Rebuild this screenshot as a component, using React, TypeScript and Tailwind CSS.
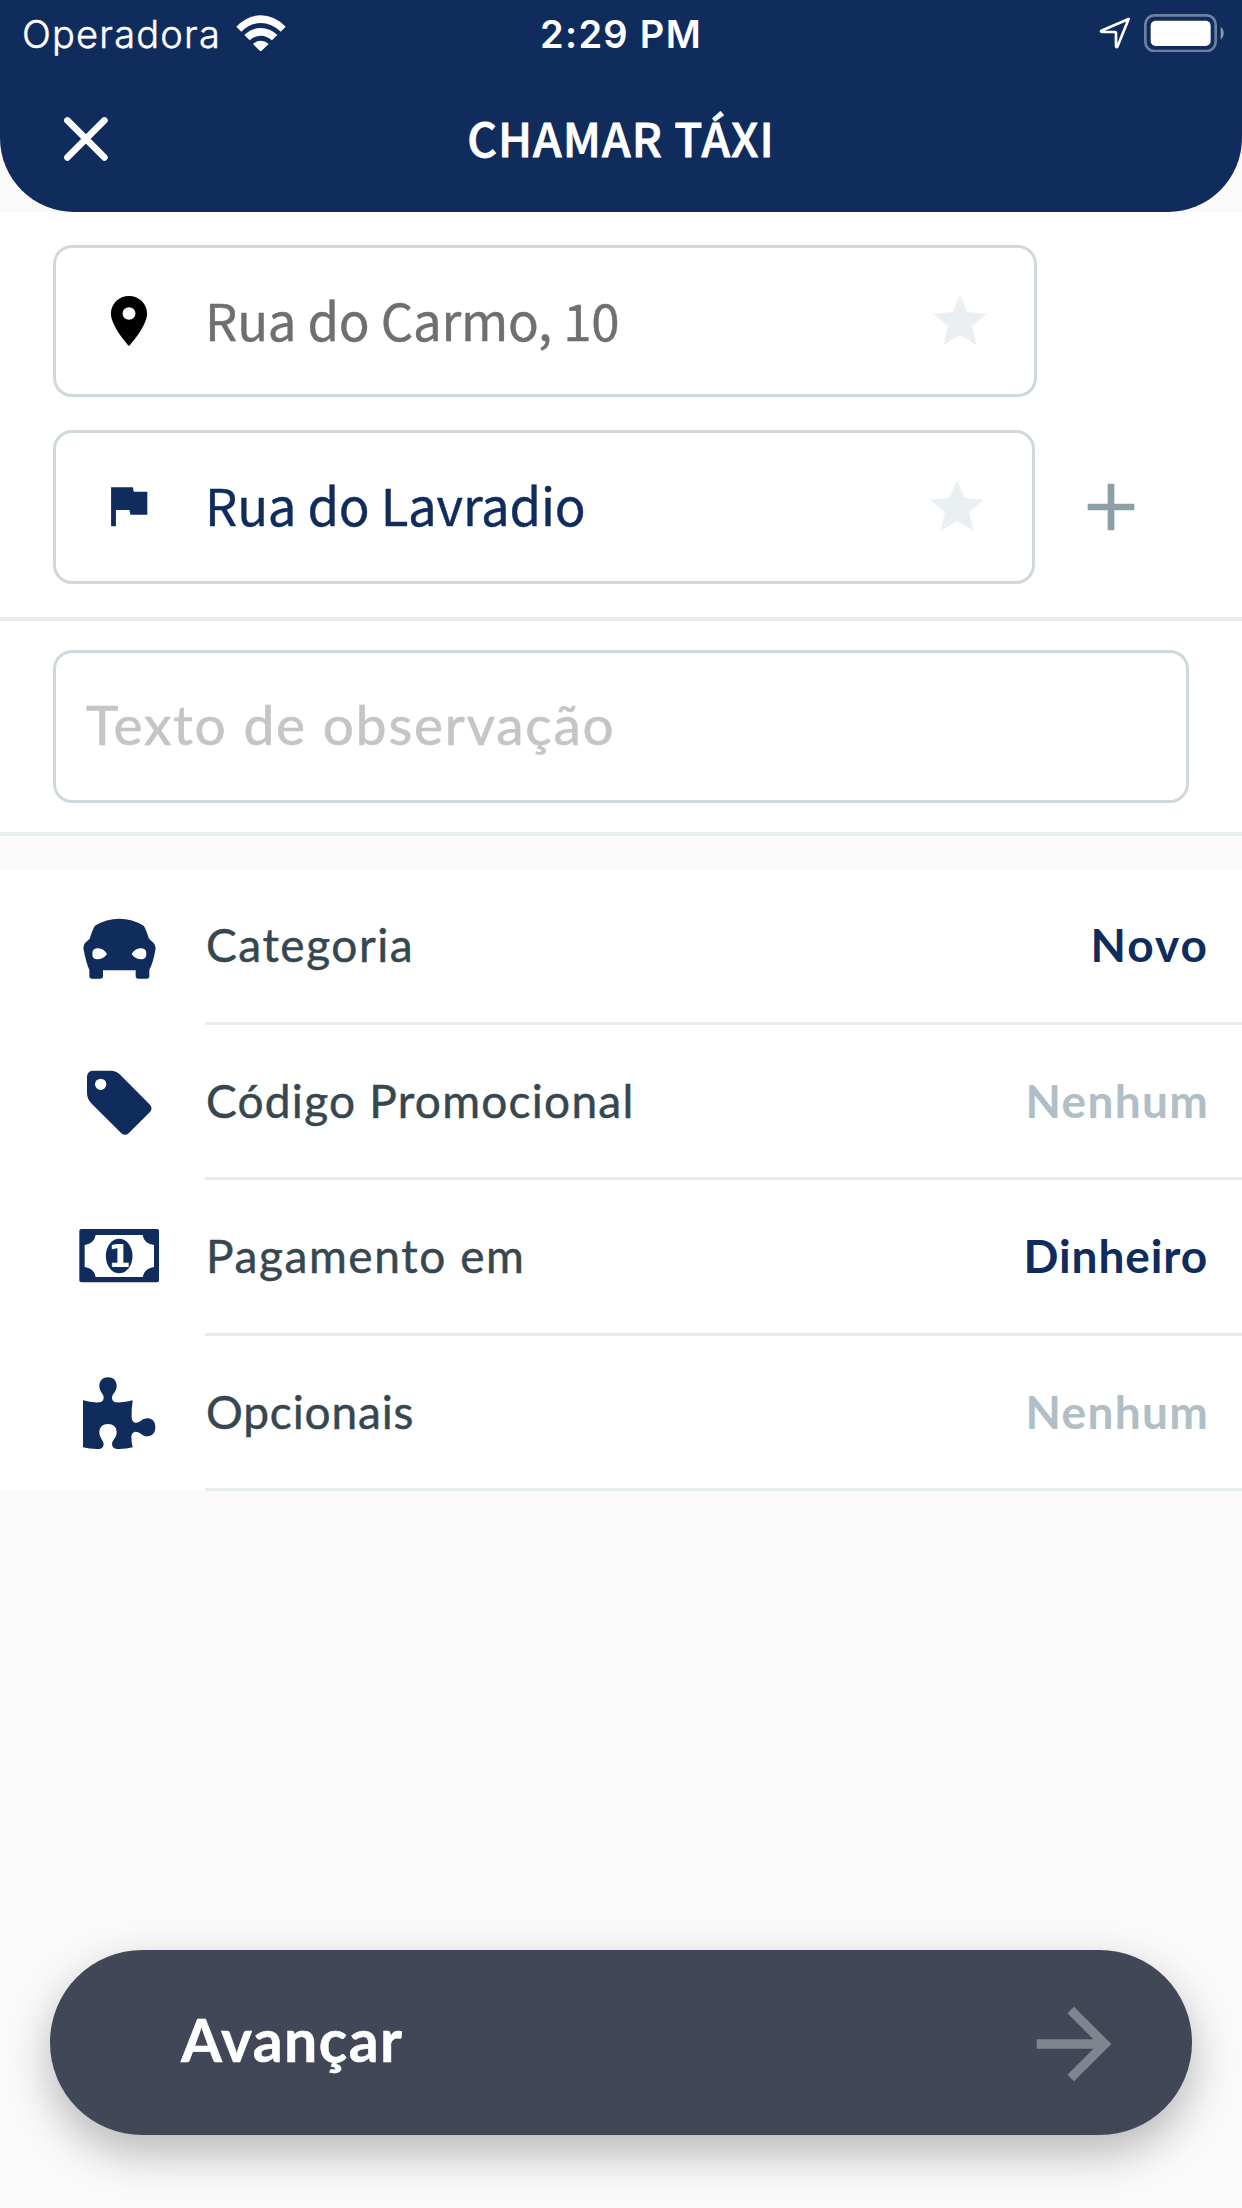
import type { ReactNode } from "react";

const STAR = "M12 17.27L18.18 21l-1.64-7.03L22 9.24l-7.19-.61L12 2 9.19 8.63 2 9.24l5.46 4.73L5.82 21z";

function WifiIcon() {
  return (
    <svg className="h-9 w-[50px]" viewBox="708 45 150 108" fill="#fff">
      <path d="M709 80Q742 46 782 46Q823 46 857 80L842 95Q815 69 782 69Q750 69 724 95Z" />
      <path d="M733 105Q755 84 782 84Q810 84 832 105L816 121Q801 107 782 107Q764 107 749 121Z" />
      <path d="M759 132Q770 122 782 122Q795 122 806 132L782 155Z" />
    </svg>
  );
}

function LocationIcon() {
  return (
    <svg className="h-8 w-8" viewBox="776 56 96 96" fill="none" stroke="#fff" strokeWidth="8" strokeLinejoin="round">
      <path d="M865 62L783 97Q780 100 785 101L824 101Q827 101 827 104L827 144Q828 149 831 145Z" />
    </svg>
  );
}

function BatteryIcon() {
  return (
    <svg className="h-[38px] w-[80px]" viewBox="912 39 240 114">
      <rect x="916" y="43" width="211" height="107" rx="27" fill="none" stroke="#7080a0" strokeWidth="8" />
      <rect x="932" y="59" width="180" height="76" rx="15" fill="#fff" />
      <path d="M1142 77Q1151 84 1151 96Q1151 109 1142 116Z" fill="#8b98b1" />
    </svg>
  );
}

function CloseIcon() {
  return (
    <svg className="h-[46px] w-[46px]" viewBox="0 0 46 46" stroke="#fff" strokeWidth="6.6" strokeLinecap="round">
      <path d="M4.4 4.4L41.4 41.4M41.4 4.4L4.4 41.4" />
    </svg>
  );
}

function StarIcon() {
  return (
    <svg className="h-16 w-16" viewBox="0 0 24 24" fill="#e9eff2">
      <path d={STAR} />
    </svg>
  );
}

function PinIcon() {
  return (
    <svg className="h-[60px] w-[62px]" viewBox="0 0 24 24" preserveAspectRatio="none">
      <path d="M12 2C8.13 2 5 5.13 5 9c0 5.25 7 13 7 13s7-7.75 7-13c0-3.87-3.13-7-7-7zm0 9.5a2.5 2.5 0 0 1 0-5 2.5 2.5 0 0 1 0 5z" />
    </svg>
  );
}

function FlagIcon() {
  return (
    <svg className="mb-[3px] h-[55px] w-[58px]" viewBox="0 0 24 24" preserveAspectRatio="none" fill="#102c5d">
      <path d="M14.4 6L14 4H5v17h2v-7h5.6l.4 2h7V6z" />
    </svg>
  );
}

function CarIcon() {
  return (
    <svg className="h-20 w-20" viewBox="114 76 240 240" fill="#102c5d">
      <path
        fillRule="evenodd"
        d="M165 138Q199 117 238 117Q277 117 311 138Q317 146 327 177L341 190Q347 197 347 206Q340 250 328 270L328 289Q328 297 320 297L295 297Q287 297 287 289L287 272L189 272L189 289Q189 297 181 297L156 297Q148 297 148 289L148 270Q140 257 130 206Q130 197 135 190L149 177Q158 148 165 138ZM157 223C157 211 163 206 175 206C186 207 194 212 201 223C193 234 184 239 172 239C162 239 157 234 157 223ZM319 223C319 211 313 206 301 206C290 207 282 212 275 223C283 234 292 239 304 239C314 239 319 234 319 223Z"
      />
    </svg>
  );
}

function TagIcon() {
  return (
    <svg className="h-20 w-20" viewBox="114 541 240 240" fill="#102c5d">
      <path
        fillRule="evenodd"
        d="M158 570L213 570Q228 570 239 581L330 672Q339 683 330 694L266 758Q255 767 244 758L155 669Q141 655 141 637L141 588Q142 571 158 570ZM182 594A17 17 0 1 0 182 628A17 17 0 1 0 182 594Z"
      />
    </svg>
  );
}

function MoneyIcon() {
  return (
    <svg className="h-20 w-20" viewBox="114 110 240 240" fill="#102c5d" overflow="visible">
      <rect x="118" y="149" width="239" height="160" rx="6" />
      <path fill="#fff" d="M167 167H308Q311 192 342 197V263Q313 267 308 293H167Q163 267 134 263V197Q163 192 167 167Z" />
      <ellipse cx="237.500" cy="230" rx="40" ry="52" />
      <text x="238.500" y="264" textAnchor="middle" fill="#fff" fontFamily="DejaVu Sans, sans-serif" fontWeight="700" fontSize="97">
        1
      </text>
    </svg>
  );
}

function PuzzleIcon() {
  return (
    <svg className="h-20 w-20" viewBox="115 576 240 240" fill="#102c5d">
      <path d="M130 661Q157 669 180 667Q192 665 192 652C192 640 179 636 179 617C179 602 190 592 205 592C221 592 231 602 231 617C231 636 217 641 217 653Q217 665 230 667Q256 668 279 661Q275 688 276 713Q278 728 289 728C303 728 306 715 324 715C339 715 347 726 347 742C347 758 338 769 324 769C307 769 302 755 288 755Q277 756 275 769Q275 786 279 802Q257 808 232 807Q218 805 217 793C217 780 231 774 231 757C231 741 221 732 205 732C189 732 179 742 179 757C179 775 192 780 192 793Q191 806 179 807Q152 808 130 802Z" />
    </svg>
  );
}

type OptionRow = { icon: ReactNode; label: string; labelClass: string; value: string; valueClass: string };

const OPTIONS: OptionRow[] = [
  { icon: <CarIcon />, label: "Categoria", labelClass: "tracking-[1.55px]", value: "Novo", valueClass: "text-[#102c5d] tracking-[2px] mr-[-1px]" },
  { icon: <TagIcon />, label: "Código Promocional", labelClass: "tracking-[1.25px]", value: "Nenhum", valueClass: "text-[#b0bec5] tracking-[1.3px] mr-[-1px]" },
  { icon: <MoneyIcon />, label: "Pagamento em", labelClass: "tracking-[1.6px]", value: "Dinheiro", valueClass: "text-[#102c5d] tracking-[0.9px]" },
  { icon: <PuzzleIcon />, label: "Opcionais", labelClass: "tracking-[0.85px]", value: "Nenhum", valueClass: "text-[#b0bec5] tracking-[1.3px] mr-[-1px]" },
];

export default function App() {
  return (
    <div className="flex h-[2208px] w-[1242px] flex-col overflow-hidden bg-[#fafafa] font-['Lato',sans-serif]">
      <header className="h-[212px] shrink-0 rounded-b-[74px] bg-[#102c5d] text-white">
        <div className="grid h-[66px] grid-cols-3 items-center font-['Inter',sans-serif] text-[38px] leading-none">
          <div className="flex items-center gap-[15px] pl-[22px]">
            <span className="pt-[2px] font-light tracking-[1.2px] [-webkit-text-stroke:0.5px_white]">Operadora</span>
            <WifiIcon />
          </div>
          <span className="pt-[2px] text-center font-semibold tracking-[1.3px]">2:29 PM</span>
          <div className="flex items-center justify-end gap-[13px] pr-[18px]">
            <LocationIcon />
            <BatteryIcon />
          </div>
        </div>
        <div className="grid h-[146px] grid-cols-3 items-center">
          <button className="ml-[63px] w-fit">
            <CloseIcon />
          </button>
          <h1 className="pb-1 text-center font-['Noto_Sans_CJK_SC',sans-serif] text-[46px] leading-none font-medium tracking-[1.05px] whitespace-nowrap [-webkit-text-stroke:0.8px_white]">
            CHAMAR TÁXI
          </h1>
        </div>
      </header>

      <section className="flex h-[409px] shrink-0 flex-col gap-[33px] border-b-4 border-[#e7ecef] bg-white pt-[33px] pl-[53px] font-['Noto_Sans_CJK_SC',sans-serif] text-[51px] leading-none tracking-[-0.25px]">
        <div className="flex h-[152px] w-[984px] items-center rounded-[19px] border-[3px] border-[#cfd8dc] pr-[42px] pl-[42px]">
          <PinIcon />
          <span className="ml-[45px] flex-1 pb-1 text-[#6f6f6f] [-webkit-text-stroke:0.4px_#6f6f6f]">Rua do Carmo, 10</span>
          <StarIcon />
        </div>
        <div className="flex items-center">
          <div className="flex h-[154px] w-[982px] items-center rounded-[19px] border-[3px] border-[#cfd8dc] pr-[43px] pl-[43px]">
            <FlagIcon />
            <span className="ml-12 flex-1 pb-[5px] text-[#102c5d] [-webkit-text-stroke:0.4px_#102c5d]">Rua do Lavradio</span>
            <StarIcon />
          </div>
          <button className="mb-px ml-9">
            <svg className="h-20 w-20" viewBox="0 0 24 24" fill="#8c9ea6">
              <path d="M19 13h-6v6h-2v-6H5v-2h6V5h2v6h6v2z" />
            </svg>
          </button>
        </div>
      </section>

      <section className="shrink-0 border-b-4 border-[#e7ecef] bg-white px-[53px] py-[29px]">
        <div className="flex h-[153px] items-center rounded-[19px] border-[3px] border-[#cfd8dc] px-[30px] pb-[4px] text-[55px] leading-none tracking-[1.8px] text-[#c5c5c7] [-webkit-text-stroke:0.6px_#c5c5c7]">
          Texto de observação
        </div>
      </section>

      <ul className="mt-[33px] shrink-0 bg-white">
        {OPTIONS.map((o) => (
          <li key={o.label} className="flex h-[155.6px] text-[46px] leading-none">
            <div className="flex w-[205px] items-center pb-[3px] pl-[78px]">{o.icon}</div>
            <div className="flex flex-1 items-center justify-between border-b-[3px] border-[#e7ecef] pr-[34px] pl-px text-[#37474f]">
              <span className={`[-webkit-text-stroke:0.5px_#37474f] ${o.labelClass}`}>{o.label}</span>
              <span className={`font-bold ${o.valueClass}`}>{o.value}</span>
            </div>
          </li>
        ))}
      </ul>

      <button className="mx-[50px] mt-auto mb-[73px] flex h-[185px] shrink-0 items-center justify-between rounded-full bg-[#414757] pr-[62px] pl-[131px] text-white shadow-[0_18px_45px_rgba(0,0,0,0.27)]">
        <span className="pb-[7px] text-[59px] leading-none font-bold tracking-[1.4px] [-webkit-text-stroke:0.5px_white]">Avançar</span>
        <svg className="mt-[3px] h-28 w-28" viewBox="0 0 24 24" fill="#80848e">
          <path d="M12 4l-1.410 1.410L16.170 11H4v2h12.170l-5.580 5.590L12 20l8-8z" />
        </svg>
      </button>
    </div>
  );
}
